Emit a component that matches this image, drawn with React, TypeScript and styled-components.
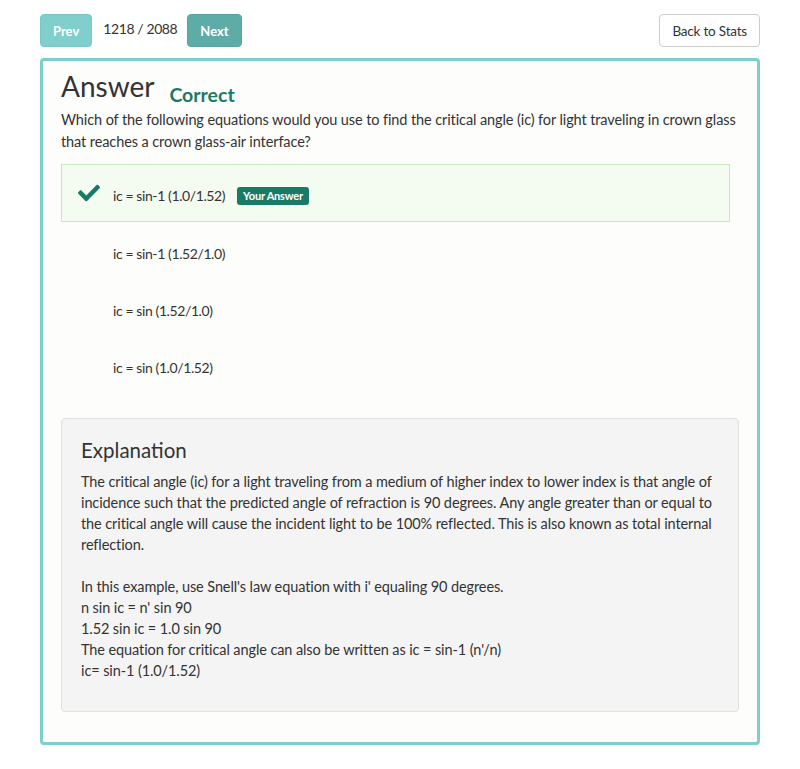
import React from "react";
import styled, { createGlobalStyle } from "styled-components";
import { FaCheck } from "react-icons/fa";

const Global = createGlobalStyle`
  html, body { margin: 0; padding: 0; background: #ffffff; }
  body { font-family: Lato, "Open Sans", sans-serif; color: #333333; }
  * { box-sizing: border-box; }
`;

const Page = styled.div`
  padding: 14px 40px 24px 40px;
`;

const Toolbar = styled.div`
  display: flex;
  align-items: center;
  height: 33px;
  margin-bottom: 11px;
`;

const NavButton = styled.button<{ $dark?: boolean }>`
  height: 33px;
  padding: 0 12px;
  border: 1px solid ${(p) => (p.$dark ? "#57a4a0" : "#76c7c4")};
  border-radius: 4px;
  background: ${(p) => (p.$dark ? "#5eaca8" : "#80cfcc")};
  color: #ffffff;
  font-family: Lato, sans-serif;
  font-weight: 700;
  font-size: 13px;
`;

const Counter = styled.span`
  font-size: 14px;
  letter-spacing: -0.4px;
  margin: 0 10px 0 11px;
  position: relative;
  top: -2px;
`;

const Spacer = styled.div`
  flex: 1;
`;

const BackButton = styled.button`
  height: 33px;
  padding: 0 12px;
  border: 1px solid #cccccc;
  border-radius: 4px;
  background: #ffffff;
  color: #333333;
  font-family: Lato, sans-serif;
  font-size: 13.5px;
  letter-spacing: -0.2px;
`;

const Panel = styled.div`
  border: 3px solid #7ecfcc;
  border-radius: 4px;
  background: #fdfdfb;
  padding: 7px 18px 30px 18px;
`;

const TitleRow = styled.div`
  display: flex;
  align-items: baseline;
`;

const Title = styled.h1`
  margin: 0;
  font-size: 28px;
  font-weight: 400;
  line-height: 36px;
  color: #333333;
`;

const Status = styled.span`
  font-size: 19.5px;
  font-weight: 700;
  color: #1b7a66;
  margin-left: 15px;
  position: relative;
  top: 5px;
`;

const Question = styled.p`
  margin: 5px 0 11px 0;
  font-size: 14.5px;
  letter-spacing: -0.1px;
  line-height: 22px;
  white-space: nowrap;
`;

const Options = styled.div`
  margin-right: 9px;
  display: flex;
  flex-direction: column;
`;

const Option = styled.div<{ $correct?: boolean }>`
  height: ${(p) => (p.$correct ? "58px" : "57px")};
  display: flex;
  align-items: center;
  padding: 5px 0 0 16px;
  border: 1px solid ${(p) => (p.$correct ? "#c9e6bf" : "transparent")};
  background: ${(p) => (p.$correct ? "#f4fbf1" : "transparent")};
  font-size: 14px;
  letter-spacing: -0.4px;
`;

const IconSlot = styled.div`
  width: 35px;
  display: flex;
  align-items: center;
  color: #1b7a66;
  position: relative;
  top: -3px;
`;

const Badge = styled.span`
  margin-left: 12px;
  background: #1b7a66;
  color: #ffffff;
  font-size: 11px;
  font-weight: 700;
  letter-spacing: -0.2px;
  padding: 3px 6px;
  border-radius: 3px;
  line-height: 12px;
`;

const Explanation = styled.div`
  margin-top: 25px;
  background: #f4f4f4;
  border: 1px solid #e1e1e1;
  border-radius: 4px;
  padding: 16px 12px 30px 19px;
`;

const ExplTitle = styled.h2`
  margin: 0 0 6px 0;
  font-size: 20.5px;
  font-weight: 400;
  line-height: 30px;
`;

const ExplText = styled.p`
  margin: 0 0 21px 0;
  font-size: 14.5px;
  letter-spacing: -0.1px;
  line-height: 21px;
  &:last-child { margin-bottom: 0; }
`;

const options = [
  { text: "ic = sin-1 (1.0/1.52)", correct: true },
  { text: "ic = sin-1 (1.52/1.0)" },
  { text: "ic = sin (1.52/1.0)" },
  { text: "ic = sin (1.0/1.52)" },
];

export default function App() {
  return (
    <>
      <Global />
      <Page>
        <Toolbar>
          <NavButton>Prev</NavButton>
          <Counter>1218 / 2088</Counter>
          <NavButton $dark>Next</NavButton>
          <Spacer />
          <BackButton>Back to Stats</BackButton>
        </Toolbar>
        <Panel>
          <TitleRow>
            <Title>Answer</Title>
            <Status>Correct</Status>
          </TitleRow>
          <Question>
            Which of the following equations would you use to find the critical angle (ic) for light traveling in crown glass
            <br />
            that reaches a crown glass-air interface?
          </Question>
          <Options>
            {options.map((o) => (
              <Option key={o.text} $correct={o.correct}>
                <IconSlot>{o.correct && <FaCheck size={22} />}</IconSlot>
                <span>{o.text}</span>
                {o.correct && <Badge>Your Answer</Badge>}
              </Option>
            ))}
          </Options>
          <Explanation>
            <ExplTitle>Explanation</ExplTitle>
            <ExplText>
              The critical angle (ic) for a light traveling from a medium of higher index to lower index is that angle of
              incidence such that the predicted angle of refraction is 90 degrees. Any angle greater than or equal to
              the critical angle will cause the incident light to be 100% reflected. This is also known as total internal
              reflection.
            </ExplText>
            <ExplText>
              In this example, use Snell's law equation with i' equaling 90 degrees.
              <br />n sin ic = n' sin 90
              <br />1.52 sin ic = 1.0 sin 90
              <br />The equation for critical angle can also be written as ic = sin-1 (n'/n)
              <br />ic= sin-1 (1.0/1.52)
            </ExplText>
          </Explanation>
        </Panel>
      </Page>
    </>
  );
}
